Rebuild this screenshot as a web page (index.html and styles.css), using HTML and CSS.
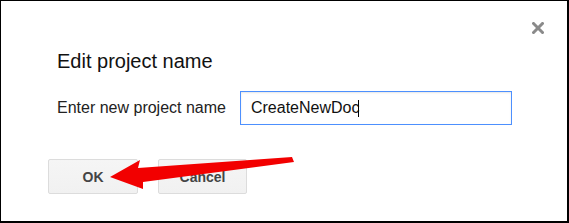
FILE: index.html
```html
<!DOCTYPE html>
<html lang="en">
<head>
    <meta charset="UTF-8">
    <meta name="viewport" content="width=device-width, initial-scale=1.0">
    <title>Edit project name</title>
    <link rel="stylesheet" href="styles.css">
</head>
<body>
    <div class="dialog">
        <div class="dialog-top">
            <svg class="close-icon" width="12" height="12" viewBox="0 0 12 12">
                <path d="M1.5 1.5 L10.5 10.5 M10.5 1.5 L1.5 10.5" stroke="#8a8a8a" stroke-width="3" stroke-linecap="square" fill="none"/>
            </svg>
        </div>

        <h2 class="dialog-title">Edit project name</h2>

        <div class="field-row">
            <label class="field-label">Enter new project name</label>
            <div class="field-input">CreateNewDoc<span class="caret"></span></div>
        </div>

        <div class="button-row">
            <button class="btn btn-ok">OK</button>
            <button class="btn">Cancel</button>
        </div>

        <!-- red pointer arrow over the buttons -->
        <svg class="pointer-arrow" width="200" height="45" viewBox="0 0 200 45">
            <polygon points="10,27 40,10 38,18 192,7 194,12 43,32 43,39" fill="#f20000"/>
        </svg>
    </div>
</body>
</html>
```

FILE: styles.css
```css
* {
    box-sizing: border-box;
}

body {
    margin: 0;
    font-family: "Liberation Sans", Arial, sans-serif;
    background: #ffffff;
    color: #222;
}

.dialog {
    position: relative;
    width: 569px;
    height: 223px;
    background: #ffffff;
    border-top: 1px solid #000;
    border-left: 1px solid #000;
    border-right: 2px solid #000;
    border-bottom: 2px solid #000;
    padding: 21px 23px 0 47px;
}

.dialog-top {
    display: flex;
    justify-content: flex-end;
    height: 12px;
}

.close-icon {
    display: block;
}

.dialog-title {
    margin: 15px 0 0 9px;
    font-size: 20px;
    font-weight: normal;
    line-height: 24px;
    color: #111;
}

.field-row {
    display: flex;
    align-items: center;
    gap: 14px;
    margin: 18px 0 0 9px;
}

.field-label {
    font-size: 16px;
    line-height: 18px;
}

.field-input {
    width: 272px;
    height: 34px;
    border: 1px solid #4d90fe;
    box-shadow: inset 0 1px 2px rgba(0, 0, 0, 0.1);
    padding: 0 10px;
    font-size: 16px;
    line-height: 32px;
    color: #111;
}

.caret {
    display: inline-block;
    width: 1px;
    height: 17px;
    margin-left: -1px;
    background: #000;
    vertical-align: -4px;
}

.button-row {
    display: flex;
    gap: 20px;
    margin-top: 34px;
}

.btn {
    width: 89px;
    height: 35px;
    background: linear-gradient(#f5f5f5, #f1f1f1);
    border: 1px solid #dcdcdc;
    border-radius: 2px;
    font-family: "Liberation Sans", Arial, sans-serif;
    font-size: 14px;
    font-weight: bold;
    color: #444;
    padding: 0;
}

.btn-ok {
    width: 90px;
}

.pointer-arrow {
    position: absolute;
    left: 99px;
    top: 149px;
}
```
